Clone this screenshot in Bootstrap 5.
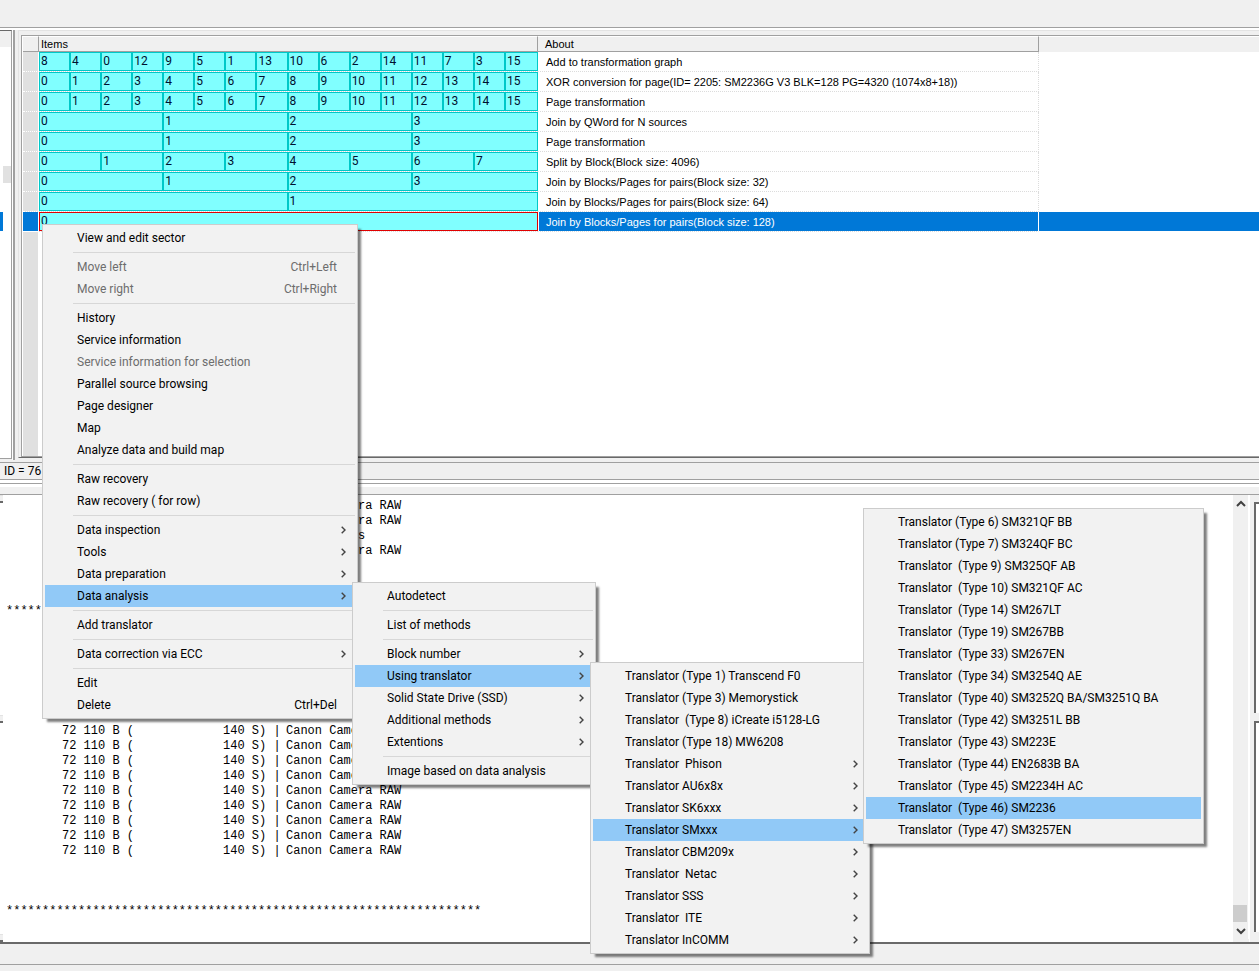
<!DOCTYPE html>
<html lang="en">
<head>
<meta charset="utf-8">
<meta name="viewport" content="width=device-width, initial-scale=1">
<title>Transformation graph</title>
<link href="https://cdn.jsdelivr.net/npm/bootstrap@5.3.0/dist/css/bootstrap.min.css" rel="stylesheet">
<style>
:root{--face:#f0f0f0;--line:#a0a0a0;--dark:#696969;--sel:#0078d7;--hot:#91c9f7}
body{background:var(--face);color:#000;font:12px/16px Roboto,"Open Sans",sans-serif;overflow:hidden}
/* window frame */
.toolstrip{height:28px;border-bottom:1px solid var(--line)}
.upper{height:434px;border-top:2px solid #fff}
.sidebar-edge{width:12px;border-right:1px solid var(--line);border-top:1px solid var(--dark);border-bottom:1px solid var(--line);background:#fff;margin-bottom:3px}
.edge-head{height:16px;background:var(--face)}
.edge-gap{height:119px}
.edge-thumb{height:17px;background:#e1e1e1;margin-left:3px}
.edge-rest{height:29px}
.edge-sel{height:19px;width:3px;background:var(--sel)}
.splitter{width:3px;background:var(--line);border-left:1px solid #fff;margin-bottom:2px}
.grid-wrap{border-top:1px solid #e3e3e3;border-left:1px solid #e3e3e3;padding:4px 0 0 2px;margin-left:3px;margin-bottom:4px;border-bottom:1px solid var(--dark)}
.grid-box{border:solid var(--line);border-width:1px 0 1px 1px;background:#fff;padding-left:1px}
.grid-rail{background:#e0e0e0;width:15px}
/* transformation table */
.steps{table-layout:fixed;width:100%;border-collapse:separate;border-spacing:0}
.steps th{height:16px;padding:1px 0 0 2px;font:11px/13px "Liberation Sans",Arial,sans-serif;background:var(--face);border:solid var(--line);border-width:0 1px 1px 0;border-top:1px solid #fff}
.steps th.pad-about{padding-left:7px}
.steps th.filler{border-right:0;border-bottom-color:var(--face)}
.steps td{height:20px;padding:0;border-bottom:1px dotted #dcdcdc}
.steps td.rail{background:#e0e0e0;border-right:1px solid #fff;border-bottom-color:#fff}
.steps td.about{font:11px/17px "Liberation Sans",Arial,sans-serif;padding:2px 0 0 7px;border-left:1px solid #fff;border-right:1px dotted #dcdcdc;white-space:nowrap}
.steps td.filler{border-bottom:0}
.steps tr.active td.rail,.steps tr.active td.about,.steps tr.active td.filler{background:var(--sel);background-clip:padding-box;color:#fff}
.steps tr.active td.about{border-right:1px solid #fff}
.steps tr.active td.filler{border-bottom:1px solid #fff}
.cells{height:19px;border:1px solid #00c8c8;background:#80ffff;color:#001030;padding-right:2px}
.cells span{flex:1 1 0;padding-left:1px;line-height:17px;border-left:1px solid #00c8c8;border-right:1px solid #00c8c8}
.cells span:first-child{border-left:0}
.cells span:last-child{border-right:0}
.active .cells{border-color:#e00000}
/* status strip between the panes */
.idstrip{height:18px;padding-left:4px;border-top:1px solid var(--line);border-bottom:1px solid var(--line);line-height:17px}
.gapline{height:4px;background:#fff;border-bottom:1px solid var(--line)}
.gapface{height:11px;border-top:3px solid #fff;border-bottom:1px solid var(--line)}
/* log */
.log-edge{width:3px;background:#fff}
.edge-part{background:var(--face);height:8px;border-top:1px solid #e3e3e3;border-bottom:2px solid var(--dark)}
.log{background:#fff;padding:4px 0 0 3px}
.log-line{height:15px;font:12px/15px "Liberation Mono","Courier New",monospace;white-space:pre}
.log-line .size{width:217px;padding-left:56px}
.log-line .secs{width:63px}
.vscroll{width:16px;background:var(--face);border-right:1px solid #fff;margin-bottom:3px}
.vscroll button{height:17px;border:0;background:none;padding:0}
.vthumb{height:17px;background:#cdcdcd;margin-right:1px}
.right-edge{width:10px;padding:7px 0 10px 4px;border-left:1px solid #fff}
.right-edge div{background:#fff;border:solid var(--dark);border-width:2px 0 0 2px}
.bottombar{height:29px;border-top:2px solid var(--dark)}
.bottombar div{height:21px;border-bottom:1px solid var(--line)}
/* context menus */
.ctx{display:block;position:absolute;min-width:0;margin:0;padding:2px;border:1px solid #ccc;border-radius:0;background:#f2f2f2;font-size:12px;color:#000;box-shadow:4px 4px 2px -1px rgba(0,0,0,.5);z-index:10}
.ctx>li{position:relative}
.ctx .dropdown-item{height:22px;padding:0 18px 0 32px;line-height:22px;color:#000;display:flex;justify-content:space-between;align-items:center;white-space:pre}
.ctx .dropdown-item.sub{padding-right:9px}
.ctx .dropdown-item:hover,.ctx .dropdown-item.active{background:var(--hot);color:#000}
.ctx .dropdown-item:disabled{color:#6d6d6d}
.ctx .dropdown-divider{margin:3px 0 3px 28px;border-top:1px solid #d7d7d7;opacity:1}
.ctx svg{width:5px;height:8px;fill:none;stroke:#444;stroke-width:1.4}
.ctx-main{left:42px;top:224px;width:316px}
.ctx-two{left:307px;top:-3px;width:244px}
.ctx-three{left:235px;top:-3px;width:280px}
.ctx-four{left:270px;bottom:-3px;width:341px}
</style>
</head>
<body>
<div class="d-flex flex-column min-vh-100">
  <header class="toolstrip"></header>
  <section class="upper d-flex">
    <div class="sidebar-edge flex-shrink-0">
      <div class="edge-head"></div><div class="edge-gap"></div><div class="edge-thumb"></div><div class="edge-rest"></div><div class="edge-sel"></div>
    </div>
    <div class="splitter flex-shrink-0"></div>
    <div class="grid-wrap d-flex flex-grow-1">
      <div class="grid-box d-flex flex-column flex-grow-1">
        <table class="steps">
          <colgroup><col style="width:16px"><col style="width:499px"><col style="width:501px"><col></colgroup>
          <thead><tr><th></th><th>Items</th><th class="pad-about">About</th><th class="filler"></th></tr></thead>
          <tbody id="steps"></tbody>
        </table>
        <div class="grid-rail flex-grow-1"></div>
      </div>
    </div>
  </section>
  <div class="idstrip">ID = 76</div>
  <div class="gapline"></div>
  <div class="gapface"></div>
  <section class="d-flex flex-grow-1">
    <div class="log-edge d-flex flex-column flex-shrink-0"><div class="edge-part"></div><div class="flex-grow-1"></div><div class="edge-part"></div><div class="flex-grow-1"></div><div class="edge-part"></div></div>
    <div class="log flex-grow-1" id="log"></div>
    <div class="vscroll d-flex flex-column flex-shrink-0">
      <button type="button" aria-label="Scroll up"><svg width="10" height="8" fill="none" stroke="#404040" stroke-width="2"><path d="M1 6l4-4 4 4"/></svg></button>
      <div class="flex-grow-1"></div>
      <div class="vthumb"></div>
      <button type="button" aria-label="Scroll down"><svg width="10" height="8" fill="none" stroke="#404040" stroke-width="2"><path d="M1 2l4 4 4-4"/></svg></button>
    </div>
    <div class="right-edge d-flex flex-column gap-2 flex-shrink-0"><div class="flex-grow-1"></div><div class="flex-grow-1"></div></div>
  </section>
  <footer class="bottombar"><div></div></footer>
</div>

<ul class="dropdown-menu ctx ctx-main">
  <li><button class="dropdown-item" type="button">View and edit sector</button></li>
  <li><hr class="dropdown-divider"></li>
  <li><button class="dropdown-item" type="button" disabled>Move left<span>Ctrl+Left</span></button></li>
  <li><button class="dropdown-item" type="button" disabled>Move right<span>Ctrl+Right</span></button></li>
  <li><hr class="dropdown-divider"></li>
  <li><button class="dropdown-item" type="button">History</button></li>
  <li><button class="dropdown-item" type="button">Service information</button></li>
  <li><button class="dropdown-item" type="button" disabled>Service information for selection</button></li>
  <li><button class="dropdown-item" type="button">Parallel source browsing</button></li>
  <li><button class="dropdown-item" type="button">Page designer</button></li>
  <li><button class="dropdown-item" type="button">Map</button></li>
  <li><button class="dropdown-item" type="button">Analyze data and build map</button></li>
  <li><hr class="dropdown-divider"></li>
  <li><button class="dropdown-item" type="button">Raw recovery</button></li>
  <li><button class="dropdown-item" type="button">Raw recovery ( for row)</button></li>
  <li><hr class="dropdown-divider"></li>
  <li><button class="dropdown-item sub" type="button">Data inspection</button></li>
  <li><button class="dropdown-item sub" type="button">Tools</button></li>
  <li><button class="dropdown-item sub" type="button">Data preparation</button></li>
  <li>
    <button class="dropdown-item sub active" type="button">Data analysis</button>
    <ul class="dropdown-menu ctx ctx-two">
      <li><button class="dropdown-item" type="button">Autodetect</button></li>
      <li><hr class="dropdown-divider"></li>
      <li><button class="dropdown-item" type="button">List of methods</button></li>
      <li><hr class="dropdown-divider"></li>
      <li><button class="dropdown-item sub" type="button">Block number</button></li>
      <li>
        <button class="dropdown-item sub active" type="button">Using translator</button>
        <ul class="dropdown-menu ctx ctx-three">
          <li><button class="dropdown-item" type="button">Translator (Type 1) Transcend F0</button></li>
          <li><button class="dropdown-item" type="button">Translator (Type 3) Memorystick</button></li>
          <li><button class="dropdown-item" type="button">Translator  (Type 8) iCreate i5128-LG</button></li>
          <li><button class="dropdown-item" type="button">Translator (Type 18) MW6208</button></li>
          <li><button class="dropdown-item sub" type="button">Translator  Phison</button></li>
          <li><button class="dropdown-item sub" type="button">Translator AU6x8x</button></li>
          <li><button class="dropdown-item sub" type="button">Translator SK6xxx</button></li>
          <li>
            <button class="dropdown-item sub active" type="button">Translator SMxxx</button>
            <ul class="dropdown-menu ctx ctx-four">
              <li><button class="dropdown-item" type="button">Translator (Type 6) SM321QF BB</button></li>
              <li><button class="dropdown-item" type="button">Translator (Type 7) SM324QF BC</button></li>
              <li><button class="dropdown-item" type="button">Translator  (Type 9) SM325QF AB</button></li>
              <li><button class="dropdown-item" type="button">Translator  (Type 10) SM321QF AC</button></li>
              <li><button class="dropdown-item" type="button">Translator  (Type 14) SM267LT</button></li>
              <li><button class="dropdown-item" type="button">Translator  (Type 19) SM267BB</button></li>
              <li><button class="dropdown-item" type="button">Translator  (Type 33) SM267EN</button></li>
              <li><button class="dropdown-item" type="button">Translator  (Type 34) SM3254Q AE</button></li>
              <li><button class="dropdown-item" type="button">Translator  (Type 40) SM3252Q BA/SM3251Q BA</button></li>
              <li><button class="dropdown-item" type="button">Translator  (Type 42) SM3251L BB</button></li>
              <li><button class="dropdown-item" type="button">Translator  (Type 43) SM223E</button></li>
              <li><button class="dropdown-item" type="button">Translator  (Type 44) EN2683B BA</button></li>
              <li><button class="dropdown-item" type="button">Translator  (Type 45) SM2234H AC</button></li>
              <li><button class="dropdown-item active" type="button">Translator  (Type 46) SM2236</button></li>
              <li><button class="dropdown-item" type="button">Translator  (Type 47) SM3257EN</button></li>
            </ul>
          </li>
          <li><button class="dropdown-item sub" type="button">Translator CBM209x</button></li>
          <li><button class="dropdown-item sub" type="button">Translator  Netac</button></li>
          <li><button class="dropdown-item sub" type="button">Translator SSS</button></li>
          <li><button class="dropdown-item sub" type="button">Translator  ITE</button></li>
          <li><button class="dropdown-item sub" type="button">Translator InCOMM</button></li>
        </ul>
      </li>
      <li><button class="dropdown-item sub" type="button">Solid State Drive (SSD)</button></li>
      <li><button class="dropdown-item sub" type="button">Additional methods</button></li>
      <li><button class="dropdown-item sub" type="button">Extentions</button></li>
      <li><hr class="dropdown-divider"></li>
      <li><button class="dropdown-item" type="button">Image based on data analysis</button></li>
    </ul>
  </li>
  <li><hr class="dropdown-divider"></li>
  <li><button class="dropdown-item" type="button">Add translator</button></li>
  <li><hr class="dropdown-divider"></li>
  <li><button class="dropdown-item sub" type="button">Data correction via ECC</button></li>
  <li><hr class="dropdown-divider"></li>
  <li><button class="dropdown-item" type="button">Edit</button></li>
  <li><button class="dropdown-item" type="button">Delete<span>Ctrl+Del</span></button></li>
</ul>

<script src="https://cdn.jsdelivr.net/npm/bootstrap@5.3.0/dist/js/bootstrap.bundle.min.js"></script>
<script>
// one entry per transformation step: source items, description
const seq = n => [...Array(n).keys()];
const steps = [
  [[8,4,0,12,9,5,1,13,10,6,2,14,11,7,3,15], 'Add to transformation graph'],
  [seq(16), 'XOR conversion for page(ID= 2205: SM2236G V3 BLK=128 PG=4320 (1074x8+18))'],
  [seq(16), 'Page transformation'],
  [seq(4), 'Join by QWord for N sources'],
  [seq(4), 'Page transformation'],
  [seq(8), 'Split by Block(Block size: 4096)'],
  [seq(4), 'Join by Blocks/Pages for pairs(Block size: 32)'],
  [seq(2), 'Join by Blocks/Pages for pairs(Block size: 64)'],
  [seq(1), 'Join by Blocks/Pages for pairs(Block size: 128)']
];
document.getElementById('steps').innerHTML = steps.map(([items, about], i) =>
  `<tr${i === steps.length - 1 ? ' class="active"' : ''}><td class="rail"></td><td><div class="cells d-flex">${
    items.map(n => `<span>${n}</span>`).join('')}</div></td><td class="about">${about}</td><td class="filler"></td></tr>`).join('');

// log of found files; separators are rows of asterisks
const row = (size, secs, name) => `<span class="size">${size}</span><span class="secs">${secs}</span><span>${name}</span>`;
const tail = text => row('', '', ' '.repeat(10) + text);
const line = i => {
  if (i === 7) return '*'.repeat(8);
  if (i === 27) return '*'.repeat(66);
  if (i === 2) return tail('s');
  if (i < 4) return tail('ra RAW');
  if (i > 14 && i < 24) return row('72 110 B (', '140 S) |', i < 19 ? 'Canon Camera' : 'Canon Camera RAW');
  return '';
};
document.getElementById('log').innerHTML = seq(28).map(i => `<div class="log-line d-flex">${line(i)}</div>`).join('');

document.querySelectorAll('.dropdown-item.sub').forEach(b =>
  b.insertAdjacentHTML('beforeend', '<svg viewBox="0 0 5 8"><path d="M.7 .7L4 4 .7 7.3"/></svg>'));
</script>
</body>
</html>
